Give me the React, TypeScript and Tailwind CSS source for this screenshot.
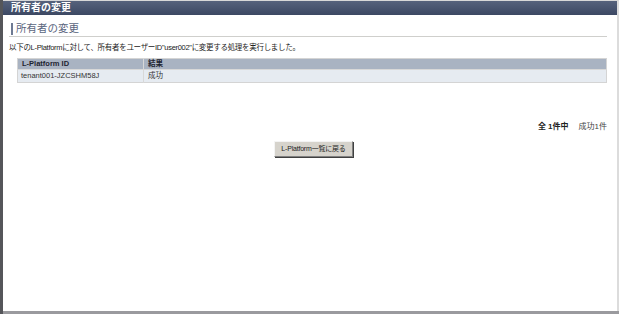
import React from 'react';

const rows = [{ id: 'tenant001-JZCSHM58J', result: '成功' }];

export default function App() {
    return (
        <div className="w-[619px] h-[314px] bg-[#f0efe9] flex font-['Liberation_Sans','Noto_Sans_CJK_JP',sans-serif] text-[#222]">
            <div className="w-[3px] bg-[#55565a]" />
            <div className="flex-1 flex flex-col">
                <div className="h-[1px] bg-[#d8d8d8]" />
                <div className="flex flex-1 flex-col bg-white border-r-[2px] border-[#dcdcdc]">
                    <div className="h-[14px] bg-gradient-to-b from-[#56627c] to-[#3c4863] flex items-center pl-[8px]">
                        <span className="text-white text-[10px] font-bold leading-none">所有者の変更</span>
                    </div>
                    <div className="flex-1 flex flex-col pl-[6px] pr-[10px]">
                        <div className="mt-[7px] flex items-center h-[13px] ml-[2px]">
                            <div className="w-[2px] h-[12px] bg-[#6e7a93]" />
                            <span className="ml-[3px] text-[10.5px] leading-none text-[#5b667e]">所有者の変更</span>
                        </div>
                        <div className="mt-[1px] h-[1px] bg-[#cfcfcc]" />
                        <p className="mt-[7px] text-[7.5px] leading-none tracking-[-0.3px]">以下のL-Platformに対して、所有者をユーザーID"user002"に変更する処理を実行しました。</p>
                        <table className="mt-[6px] ml-[8px] border-collapse border border-[#d4d4d4] text-[7.5px]">
                            <thead>
                                <tr className="bg-[#a9b3c2] h-[11px]">
                                    <th className="w-[126px] text-left font-bold pl-[4px] border-r border-[#d8d8d8] text-[#1e2430] leading-none">L-Platform ID</th>
                                    <th className="text-left font-bold pl-[4px] leading-none text-[#1e2430]">結果</th>
                                </tr>
                            </thead>
                            <tbody>
                                {rows.map(r => (
                                    <tr key={r.id} className="bg-[#e6ebf1] h-[13px] border-t border-[#d8d8d8]">
                                        <td className="pl-[3px] border-r border-[#d8d8d8] leading-none text-[#333]">{r.id}</td>
                                        <td className="pl-[4px] leading-none text-[#333]">{r.result}</td>
                                    </tr>
                                ))}
                            </tbody>
                        </table>
                        <div className="mt-[40px] flex justify-end items-center pr-0 text-[8px] leading-none">
                            <span className="font-bold">全 1件中</span>
                            <span className="ml-[10px] text-[#444]">成功1件</span>
                        </div>
                        <div className="mt-[10px] flex justify-center pl-[11px]">
                            <button className="h-[16px] w-[79px] whitespace-nowrap bg-[#d6d3cc] border border-t-[#f4f4f4] border-l-[#f4f4f4] border-r-[#808080] border-b-[#808080] text-[7px] leading-none text-[#222] shadow-[1px_1px_0_#404040] tracking-[-0.2px]">L-Platform一覧に戻る</button>
                        </div>
                    </div>
                </div>
                <div className="h-[3px] bg-[#9a9a9e]" />
            </div>
        </div>
    );
}
